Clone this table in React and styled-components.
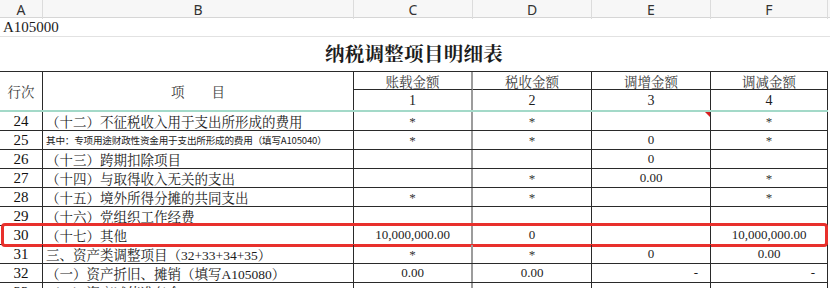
import React from 'react';
import styled, { createGlobalStyle, css } from 'styled-components';

const GlobalStyle = createGlobalStyle`
  html, body {
    margin: 0;
    padding: 0;
    background: #fff;
    overflow: hidden;
  }
  * { box-sizing: border-box; }
`;

const SERIF = `"Liberation Serif", "Noto Serif CJK SC", "Noto Sans CJK SC", serif`;
const COLS = '43px 311px 119px 119px 119px 117px';

const Sheet = styled.div`
  width: 830px;
  height: 288px;
  overflow: hidden;
  font-family: ${SERIF};
  color: #1c1c1c;
`;

const ColumnBar = styled.div`
  display: grid;
  grid-template-columns: ${COLS} 1fr;
  height: 18px;
  background: #f7f7f7;
  border-bottom: 1px solid #d6d6d6;
`;

const ColumnLetter = styled.div`
  display: flex;
  align-items: center;
  justify-content: center;
  font-family: "Noto Sans", "Liberation Sans", sans-serif;
  font-size: 14px;
  color: #333;
  border-right: 1px solid #dcdcdc;
`;

const CodeRow = styled.div`
  height: 19px;
  border-bottom: 1px solid #e2e2e2;
  padding-left: 3px;
  font-size: 15px;
  line-height: 18px;
`;

const TitleRow = styled.div`
  width: 828px;
  height: 35px;
  border-bottom: 1px solid #2a2a2a;
  display: flex;
  align-items: center;
  justify-content: center;
  font-size: 19.5px;
  font-weight: 700;
  letter-spacing: 0.3px;
  padding-bottom: 2px;
`;

const HeadGrid = styled.div`
  display: grid;
  width: 828px;
  grid-template-columns: ${COLS};
  grid-template-rows: 18px 20px;
  border-bottom: 2px solid #a3d9c8;
`;

const borderFor = (kind) => {
  if (kind === 'gray') return '2px solid #9c9c9c';
  if (kind === 'none') return 'none';
  return '1px solid #2a2a2a';
};

const HeadCell = styled.div`
  display: flex;
  align-items: center;
  justify-content: center;
  font-size: 13.5px;
  color: #3a3a3a;
  border-right: ${(p) => borderFor(p.$rb)};
  ${(p) => p.$span && css`grid-row: 1 / span 2;`}
  ${(p) => p.$top && css`border-bottom: 1px solid #2a2a2a;`}
  ${(p) => p.$num && css`font-size: 14px; color: #1c1c1c; padding-top: 1px;`}
`;

const Row = styled.div`
  position: relative;
  display: grid;
  width: 828px;
  grid-template-columns: ${COLS};
  height: 19px;
  border-bottom: 1px solid #2a2a2a;

  ${(p) =>
    p.$marked &&
    css`
      &::after {
        content: '';
        position: absolute;
        left: 1px;
        right: 0;
        top: -3px;
        bottom: -3px;
        border: 3px solid #e8302c;
        border-radius: 4px;
        pointer-events: none;
      }
    `}
`;

const Cell = styled.div`
  position: relative;
  display: flex;
  align-items: center;
  justify-content: ${(p) =>
    p.$align === 'left' ? 'flex-start' : p.$align === 'right' ? 'flex-end' : 'center'};
  padding: ${(p) => (p.$align === 'right' ? '0 12px 0 0' : p.$align === 'left' ? '0 0 0 3px' : '0')};
  font-size: 13px;
  white-space: nowrap;
  overflow: hidden;
  border-right: ${(p) => borderFor(p.$rb)};
  ${(p) => p.$label && css`font-size: 13.5px;`}
  ${(p) => p.$num && css`font-size: 15px; font-weight: 500; color: #111;`}
  ${(p) =>
    p.$small &&
    css`
      font-family: "Noto Sans CJK SC", "Noto Sans", sans-serif;
      font-size: 9.6px;
      letter-spacing: -0.2px;
    `}
  ${(p) => p.$star && css`font-size: 13px; color: #333; padding-top: 2px;`}
`;

const CommentMark = styled.span`
  position: absolute;
  top: 0;
  right: 0;
  width: 0;
  height: 0;
  border-top: 5px solid #d42020;
  border-left: 5px solid transparent;
`;

const rightBorders = ['dark', 'dark', 'gray', 'dark', 'dark', 'dark'];

const rows = [
  { n: '24', label: '（十二）不征税收入用于支出所形成的费用', v: ['*', '*', '', '*'], mark: true },
  { n: '25', label: '其中：专项用途财政性资金用于支出所形成的费用（填写A105040）', small: true, v: ['*', '*', '0', '*'] },
  { n: '26', label: '（十三）跨期扣除项目', v: ['', '', '0', ''] },
  { n: '27', label: '（十四）与取得收入无关的支出', v: ['', '*', '0.00', '*'] },
  { n: '28', label: '（十五）境外所得分摊的共同支出', v: ['*', '*', '', '*'] },
  { n: '29', label: '（十六）党组织工作经费', v: ['', '', '', ''] },
  { n: '30', label: '（十七）其他', v: ['10,000,000.00', '0', '', '10,000,000.00'], hl: true },
  { n: '31', label: '三、资产类调整项目（32+33+34+35）', v: ['*', '*', '0', '0.00'] },
  { n: '32', label: '（一）资产折旧、摊销（填写A105080）', v: ['0.00', '0.00', '-', '-'] },
  { n: '33', label: '（二）资产减值准备金', v: ['', '', '', ''] },
];

export default function App() {
  return (
    <Sheet>
      <GlobalStyle />
      <ColumnBar>
        {['A', 'B', 'C', 'D', 'E', 'F'].map((c) => (
          <ColumnLetter key={c}>{c}</ColumnLetter>
        ))}
        <div />
      </ColumnBar>
      <CodeRow>A105000</CodeRow>
      <TitleRow>纳税调整项目明细表</TitleRow>

      <HeadGrid>
        <HeadCell $span>行次</HeadCell>
        <HeadCell $span>项　　目</HeadCell>
        <HeadCell $top $rb="gray">账载金额</HeadCell>
        <HeadCell $top>税收金额</HeadCell>
        <HeadCell $top>调增金额</HeadCell>
        <HeadCell $top>调减金额</HeadCell>
        <HeadCell $num $rb="gray">1</HeadCell>
        <HeadCell $num>2</HeadCell>
        <HeadCell $num>3</HeadCell>
        <HeadCell $num>4</HeadCell>
      </HeadGrid>

      {rows.map((r) => (
        <Row key={r.n} $marked={r.hl}>
          <Cell $num $rb={rightBorders[0]}>{r.n}</Cell>
          <Cell $align="left" $label $small={r.small} $rb={rightBorders[1]}>
            {r.label}
          </Cell>
          {r.v.map((val, i) => (
            <Cell
              key={i}
              $rb={rightBorders[i + 2]}
              $star={val === '*'}
              $align={val === '-' ? 'right' : 'center'}
            >
              {val}
              {r.mark && i === 2 && <CommentMark />}
            </Cell>
          ))}
        </Row>
      ))}
    </Sheet>
  );
}
